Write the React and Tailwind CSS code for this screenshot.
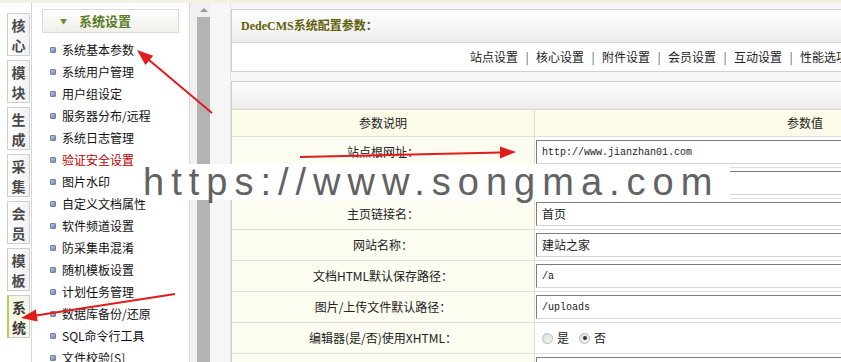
import React from 'react';

const tabs = ['核心', '模块', '生成', '采集', '会员', '模板', '系统'];

const menuItems = [
  '系统基本参数',
  '系统用户管理',
  '用户组设定',
  '服务器分布/远程',
  '系统日志管理',
  '验证安全设置',
  '图片水印',
  '自定义文档属性',
  '软件频道设置',
  '防采集串混淆',
  '随机模板设置',
  '计划任务管理',
  '数据库备份/还原',
  'SQL命令行工具',
  '文件校验[S]',
];

const configTabs = ['站点设置', '核心设置', '附件设置', '会员设置', '互动设置', '性能选项'];

// second row sits under the watermark in the screenshot, so it carries no text
const rows = [
  { label: '站点根网址：', value: 'http://www.jianzhan01.com', mono: true },
  { label: '', value: '', mono: true },
  { label: '主页链接名：', value: '首页' },
  { label: '网站名称：', value: '建站之家' },
  { label: '文档HTML默认保存路径：', value: '/a', mono: true },
  { label: '图片/上传文件默认路径：', value: '/uploads', mono: true },
  { label: '编辑器(是/否)使用XHTML：', radio: true },
  { label: '', value: '', mono: true },
];

const Radio = ({ checked }) => (
  <span className="w-[11px] h-[11px] rounded-full border border-[#b9b9b9] bg-linear-to-br from-[#dcdcdc] to-[#f8f8f8] flex items-center justify-center">
    {checked && <span className="w-[4px] h-[4px] rounded-full bg-[#333]" />}
  </span>
);

const App = () => {
  return (
    <div className="w-[841px] h-[362px] overflow-hidden relative bg-white flex flex-col font-['Noto_Sans_CJK_SC',sans-serif] text-[#222]">
      <div className="h-[3px] shrink-0 bg-[#f1f1e4]" />
      <div className="flex flex-1 min-h-0">
        {/* Tabs */}
        <div className="w-[32px] shrink-0 bg-white border-r border-[#d6d6d6] pt-[10px] pl-[7px] flex flex-col gap-[4px]">
          {tabs.map((t, i) => {
            const active = i === tabs.length - 1;
            return (
              <div
                key={t}
                className={
                  active
                    ? 'w-[23px] h-[43px] border border-[#ccc] border-l-[2px] border-l-[#b6c96a] bg-[#f6f8e6] flex flex-col items-center justify-center text-[14px] leading-[20px] font-bold text-[#3a3a3a]'
                    : 'w-[23px] h-[43px] border border-[#cfcfcf] bg-linear-to-r from-white to-[#f1f1f1] flex flex-col items-center justify-center text-[14px] leading-[20px] font-bold text-[#4a4a4a]'
                }
              >
                <span>{t[0]}</span>
                <span>{t[1]}</span>
              </div>
            );
          })}
        </div>

        {/* Menu */}
        <div className="w-[158px] shrink-0 bg-white border-r border-[#d8d8d8] pt-[6px]">
          <div className="mx-[10px] h-[24px] border border-[#dcdcdc] bg-linear-to-b from-white to-[#eef0e8] flex items-center pl-[17px] gap-[12px]">
            <span className="text-[7px] text-[#6c8e2a]">▼</span>
            <span className="text-[13px] font-bold text-[#5a7a24]">系统设置</span>
          </div>
          <div className="pt-[6px]">
            {menuItems.map((m, i) => (
              <div key={m} className="h-[22px] flex items-center pl-[18px] gap-[6px]">
                <span className="w-[6px] h-[6px] rounded-[1px] border border-[#6f82ab] bg-linear-to-br from-[#b8c6e2] to-[#7388b4]" />
                <span className={i === 5 ? 'text-[12px] text-[#c00000]' : 'text-[12px] text-[#111]'}>{m}</span>
              </div>
            ))}
          </div>
        </div>

        {/* Scroll column */}
        <div className="w-[41px] shrink-0 flex">
          <div className="w-[7px] bg-[#f0f0f0]" />
          <div className="w-[13px] flex flex-col bg-[#f0f0f0]">
            <div className="h-[14px] flex items-center justify-center">
              <span className="w-0 h-0 border-l-[4px] border-r-[4px] border-b-[4px] border-l-transparent border-r-transparent border-b-[#9a9a9a]" />
            </div>
            <div className="flex-1 bg-[#b3b3b3]" />
          </div>
          <div className="flex-1 bg-[#f6f6f6] border-r border-[#e2e2e2]" />
        </div>

        {/* Main */}
        <div className="flex-1 min-w-0 bg-[#f6f6f6] overflow-hidden pt-[6px]">
          <div className="w-[845px] border border-[#cfcfcf] bg-white">
            <div className="h-[33px] bg-linear-to-b from-white to-[#ececec] border-b border-[#d6d6d6] flex items-center pl-[9px]">
              <span className="text-[12px] font-bold text-[#5f5f08] font-['Liberation_Serif','Noto_Sans_CJK_SC',serif]">DedeCMS系统配置参数：</span>
            </div>
            <div className="h-[28px] flex items-center pl-[238px] text-[12px] text-[#222]">
              {configTabs.map((c, i) => (
                <React.Fragment key={c}>
                  {i > 0 && <span className="w-[18px] text-center text-[#666]">|</span>}
                  <span className="whitespace-nowrap">{c}</span>
                </React.Fragment>
              ))}
            </div>
          </div>

          <div className="w-[845px] mt-[9px] border border-[#cfcfcf] bg-white">
            <div className="h-[28px] bg-linear-to-b from-white to-[#ececec] border-b border-[#d6d6d6]" />
            <div className="h-[27px] flex bg-[#fbfbe7] border-b border-[#dedede] text-[12px]">
              <div className="w-[303px] border-r border-[#dcdcd0] flex items-center justify-center">参数说明</div>
              <div className="flex-1 flex items-center justify-center">参数值</div>
            </div>
            {rows.map((r, idx) => (
              <div key={idx} className="h-[31px] flex border-b border-[#dedede] text-[12px]">
                <div className="w-[303px] bg-[#fcfcf1] border-r border-[#dcdcd0] flex items-center justify-center whitespace-nowrap">
                  {r.label}
                </div>
                <div className="flex-1 flex items-center pl-[1px]">
                  {r.radio ? (
                    <div className="flex items-center pl-[6px] text-[12px]">
                      <Radio />
                      <span className="ml-[4px] mr-[10px]">是</span>
                      <Radio checked />
                      <span className="ml-[4px]">否</span>
                    </div>
                  ) : (
                    <div
                      className={
                        'w-[520px] h-[24px] border-t border-l border-[#7c7c7c] border-r border-b border-r-[#d4d4d4] border-b-[#d4d4d4] flex items-center pl-[5px] bg-white ' +
                        (r.mono ? "font-['Liberation_Mono',monospace] text-[10px]" : 'text-[12px]')
                      }
                    >
                      {r.value}
                    </div>
                  )}
                </div>
              </div>
            ))}
          </div>
        </div>
      </div>

      {/* Watermark */}
      <div className="absolute left-[140px] top-[164px] w-[590px] h-[36px] bg-white flex items-center">
        <span className="text-[38px] leading-[36px] tracking-[7px] text-[#626262] font-['Liberation_Sans',sans-serif] whitespace-nowrap pl-[3px]">
          https://www.songma.com
        </span>
      </div>

      {/* Annotation arrows */}
      <svg className="absolute inset-0 pointer-events-none" width="841" height="362" viewBox="0 0 841 362">
        <g stroke="#e01c1c" strokeWidth="2" fill="#e01c1c">
          <line x1="212" y1="113" x2="149" y2="60" />
          <polygon points="137,50 153.2,55.7 145.4,64.9" stroke="none" />
          <line x1="300" y1="157" x2="501" y2="152.4" />
          <polygon points="516,152 500.1,146.4 499.9,158.4" stroke="none" />
          <line x1="175" y1="294" x2="36" y2="315.5" />
          <polygon points="21,318 37.7,321.4 35.9,309.6" stroke="none" />
        </g>
      </svg>
    </div>
  );
};

export default App;
